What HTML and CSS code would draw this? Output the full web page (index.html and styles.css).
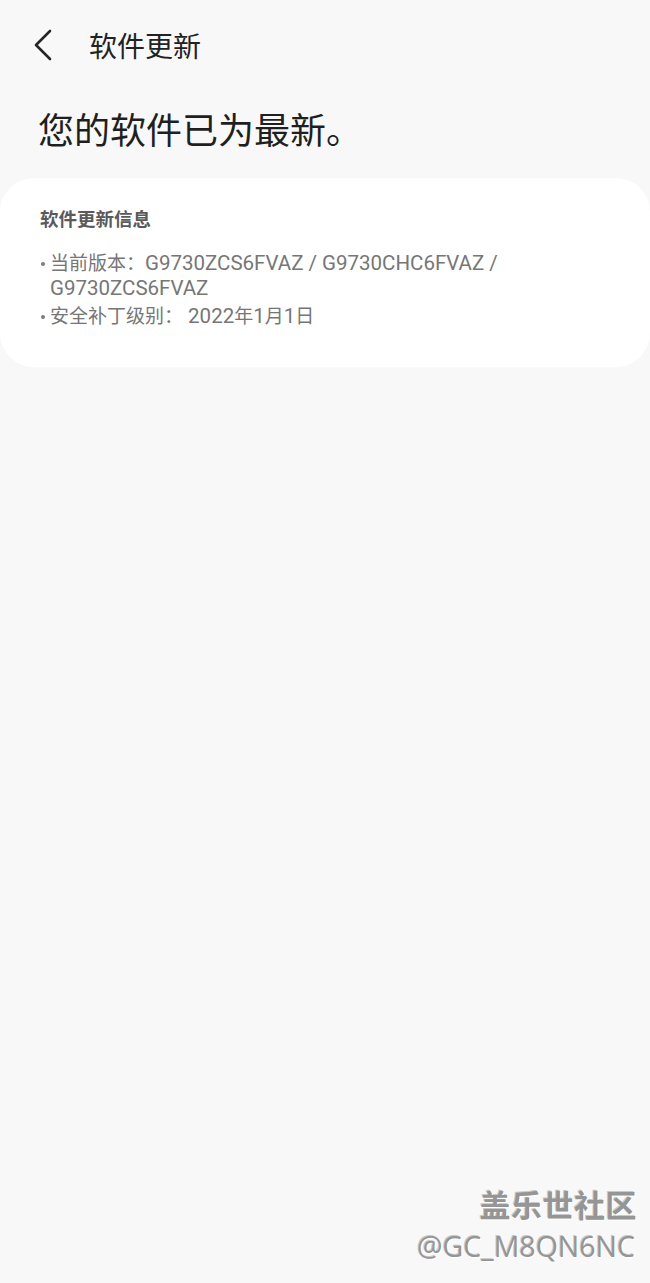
FILE: index.html
```html
<!DOCTYPE html>
<html lang="zh-CN">
<head>
<meta charset="utf-8">
<title>软件更新</title>
<link rel="stylesheet" href="styles.css">
</head>
<body>
<div class="screen">
  <header class="appbar">
    <svg class="back" width="24" height="34" viewBox="0 0 24 34" aria-hidden="true">
      <path d="M17 3 L3 17 L17 31" fill="none" stroke="#252525" stroke-width="2.6" stroke-linecap="round" stroke-linejoin="round"/>
    </svg>
    <h1 class="apptitle">软件更新</h1>
  </header>
  <h2 class="status">您的软件已为最新。</h2>
  <section class="card">
    <h3 class="card-title">软件更新信息</h3>
    <ul class="info">
      <li><span class="cjk">当前版本：</span><span class="ver">G9730ZCS6FVAZ / G9730CHC6FVAZ /</span> <span class="ver">G9730ZCS6FVAZ</span></li>
      <li><span class="cjk">安全补丁级别：</span> 2022<span class="cjk">年</span>1<span class="cjk">月</span>1<span class="cjk">日</span></li>
    </ul>
  </section>
  <div class="watermark">
    <div class="wm-brand">盖乐世社区</div>
    <div class="wm-user">@GC_M8QN6NC</div>
  </div>
</div>
</body>
</html>
```
FILE: styles.css
```css
html, body {
  margin: 0;
  padding: 0;
  background: #f8f8f8;
}
body {
  font-family: Roboto, "Noto Sans CJK SC", sans-serif;
  width: 650px;
  height: 1283px;
  overflow: hidden;
}
.screen {
  position: relative;
  width: 650px;
  height: 1283px;
  background: #f8f8f8;
}
.appbar {
  display: flex;
  align-items: center;
  height: 90px;
  padding-left: 33px;
  box-sizing: border-box;
}
.back {
  display: block;
  margin-top: -1px;
}
.apptitle {
  margin: 0 0 0 32px;
  font-family: "Noto Sans CJK SC", sans-serif;
  font-weight: 400;
  font-size: 28px;
  color: #222;
  line-height: 1;
}
.status {
  margin: 0;
  padding: 19px 0 0 38px;
  height: 69px;
  font-family: "Noto Sans CJK SC", sans-serif;
  font-weight: 400;
  font-size: 36px;
  line-height: 38px;
  color: #1f1f1f;
}
.card {
  background: #fff;
  border-radius: 34px;
  height: 189px;
  box-sizing: border-box;
  padding: 27px 40px 0 40px;
}
.card-title {
  margin: 0;
  font-family: "Noto Sans CJK SC", sans-serif;
  font-weight: 700;
  font-size: 18.5px;
  line-height: 26px;
  color: #5a5a5a;
}
.info {
  list-style: none;
  margin: 20px 0 0 0;
  padding: 0 0 0 10px;
  color: #767676;
  font-family: Roboto, "Noto Sans CJK SC", sans-serif;
  font-size: 20.5px;
  line-height: 25px;
  width: 470px;
}
.cjk {
  font-family: "Noto Sans CJK SC", sans-serif;
  font-size: 19px;
  line-height: 20px;
}
.ver {
  white-space: nowrap;
}
.info li {
  position: relative;
}
.info li::before {
  content: "";
  position: absolute;
  left: -9px;
  top: 11px;
  width: 4px;
  height: 4px;
  border-radius: 50%;
  background: #7a7a7a;
}
.info li + li {
  margin-top: 3px;
}
.watermark {
  position: absolute;
  right: 13px;
  bottom: 17px;
  text-align: right;
  color: #959595;
  text-shadow: 1px 1px 0 #ffffff, -1px -1px 0 #c8c8c8;
}
.wm-brand {
  font-family: "Noto Sans CJK SC", sans-serif;
  font-weight: 700;
  font-size: 31px;
  line-height: 40px;
  letter-spacing: 0.5px;
}
.wm-user {
  font-family: "Open Sans", sans-serif;
  font-size: 28.5px;
  line-height: 40px;
  margin-top: 2px;
  margin-right: 2px;
}
```
